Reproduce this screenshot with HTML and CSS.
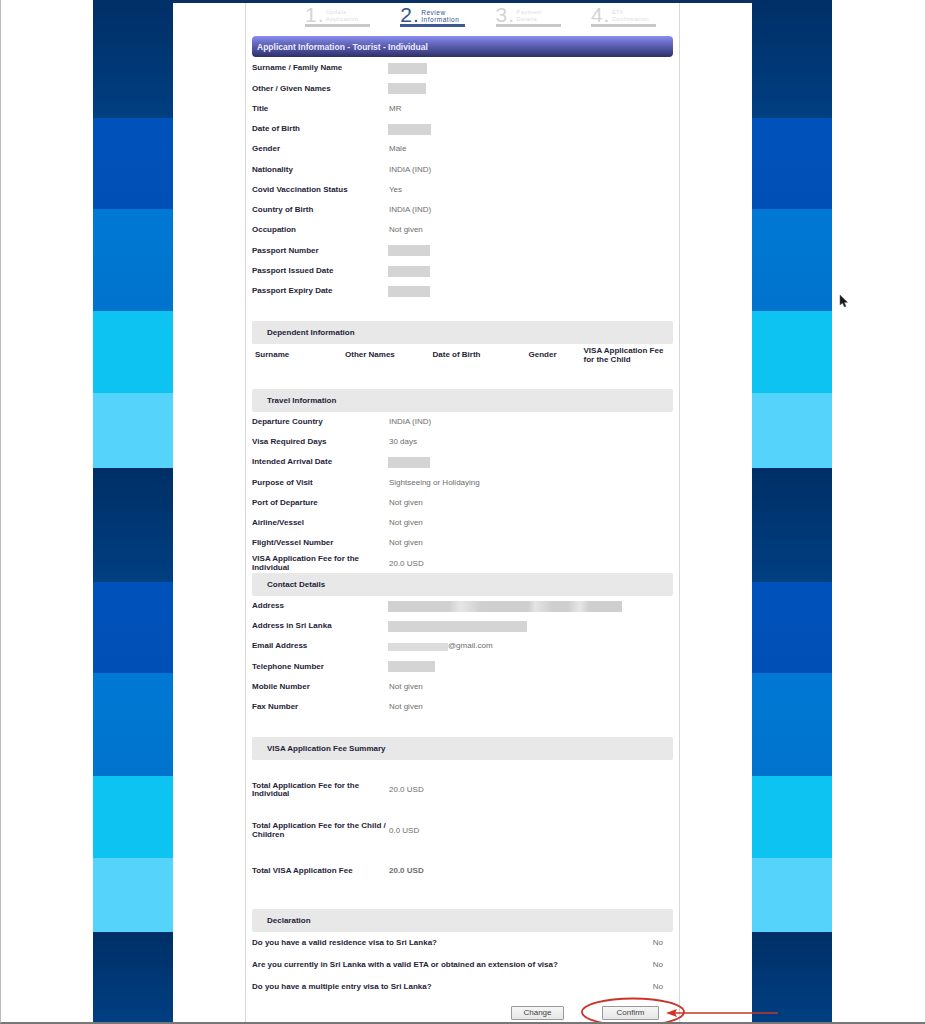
FILE: index.html
```html
<!DOCTYPE html>
<html lang="en">
<head>
<meta charset="utf-8">
<title>Review Information</title>
<link rel="stylesheet" href="styles.css">
</head>
<body>
<div class="page">
  <div class="stripes">
    <i class="s s-dark1"></i><i class="s s-blue1"></i><i class="s s-mid1"></i><i class="s s-cyan1"></i><i class="s s-light1"></i>
    <i class="s s-dark2"></i><i class="s s-blue2"></i><i class="s s-mid2"></i><i class="s s-cyan2"></i><i class="s s-light2"></i><i class="s s-dark3"></i>
  </div>
  <main class="sheet">
    <div class="column">
      <div class="steps">
        <div class="step"><span class="num">1.</span><span class="lbl">Update<br>Application</span></div>
        <div class="step on"><span class="num">2.</span><span class="lbl">Review<br>Information</span></div>
        <div class="step"><span class="num">3.</span><span class="lbl">Payment<br>Details</span></div>
        <div class="step"><span class="num">4.</span><span class="lbl">ETA<br>Confirmation</span></div>
      </div>
      <h1 class="title">Applicant Information - Tourist - Individual</h1>
      <section class="rows">
        <div class="row"><b>Surname / Family Name</b><span><em class="mask w38"></em></span></div>
        <div class="row"><b>Other / Given Names</b><span><em class="mask w37"></em></span></div>
        <div class="row"><b>Title</b><span>MR</span></div>
        <div class="row"><b>Date of Birth</b><span><em class="mask w42"></em></span></div>
        <div class="row"><b>Gender</b><span>Male</span></div>
        <div class="row"><b>Nationality</b><span>INDIA (IND)</span></div>
        <div class="row"><b>Covid Vaccination Status</b><span>Yes</span></div>
        <div class="row"><b>Country of Birth</b><span>INDIA (IND)</span></div>
        <div class="row"><b>Occupation</b><span>Not given</span></div>
        <div class="row"><b>Passport Number</b><span><em class="mask w41"></em></span></div>
        <div class="row"><b>Passport Issued Date</b><span><em class="mask w41"></em></span></div>
        <div class="row"><b>Passport Expiry Date</b><span><em class="mask w41"></em></span></div>
      </section>
      <h2 class="band band-dep">Dependent Information</h2>
      <div class="dep">
        <b>Surname</b><b>Other Names</b><b>Date of Birth</b><b>Gender</b><b class="dep-fee">VISA Application Fee for the Child</b>
      </div>
      <h2 class="band band-travel">Travel Information</h2>
      <section class="rows">
        <div class="row"><b>Departure Country</b><span>INDIA (IND)</span></div>
        <div class="row"><b>Visa Required Days</b><span>30 days</span></div>
        <div class="row"><b>Intended Arrival Date</b><span><em class="mask w41"></em></span></div>
        <div class="row"><b>Purpose of Visit</b><span>Sightseeing or Holidaying</span></div>
        <div class="row"><b>Port of Departure</b><span>Not given</span></div>
        <div class="row"><b>Airline/Vessel</b><span>Not given</span></div>
        <div class="row"><b>Flight/Vessel Number</b><span>Not given</span></div>
        <div class="row"><b>VISA Application Fee for the Individual</b><span>20.0 USD</span></div>
      </section>
      <h2 class="band band-contact">Contact Details</h2>
      <section class="rows">
        <div class="row"><b>Address</b><span><em class="mask w234 patchy"></em></span></div>
        <div class="row"><b>Address in Sri Lanka</b><span><em class="mask w139"></em></span></div>
        <div class="row"><b>Email Address</b><span><em class="mask w60 flat"></em>@gmail.com</span></div>
        <div class="row"><b>Telephone Number</b><span><em class="mask w46"></em></span></div>
        <div class="row"><b>Mobile Number</b><span>Not given</span></div>
        <div class="row"><b>Fax Number</b><span>Not given</span></div>
      </section>
      <h2 class="band band-fee">VISA Application Fee Summary</h2>
      <section class="fees">
        <div class="row tall"><b>Total Application Fee for the Individual</b><span>20.0 USD</span></div>
        <div class="row tall"><b>Total Application Fee for the Child / Children</b><span>0.0 USD</span></div>
        <div class="row tall"><b>Total VISA Application Fee</b><span class="strong">20.0 USD</span></div>
      </section>
      <h2 class="band band-decl">Declaration</h2>
      <section class="decl">
        <div class="q"><b>Do you have a valid residence visa to Sri Lanka?</b><span>No</span></div>
        <div class="q"><b>Are you currently in Sri Lanka with a valid ETA or obtained an extension of visa?</b><span>No</span></div>
        <div class="q"><b>Do you have a multiple entry visa to Sri Lanka?</b><span>No</span></div>
      </section>
      <div class="actions">
        <button class="btn" type="button">Change</button>
        <button class="btn" type="button">Confirm</button>
      </div>
    </div>
  </main>
  <div class="stripes">
    <i class="s s-dark1"></i><i class="s s-blue1"></i><i class="s s-mid1"></i><i class="s s-cyan1"></i><i class="s s-light1"></i>
    <i class="s s-dark2"></i><i class="s s-blue2"></i><i class="s s-mid2"></i><i class="s s-cyan2"></i><i class="s s-light2"></i><i class="s s-dark3"></i>
  </div>
  <svg class="callout" width="220" height="34" viewBox="0 0 220 34" aria-hidden="true">
    <ellipse cx="52" cy="15" rx="51" ry="13.500" fill="none" stroke="#c9352a" stroke-width="1.8"/>
    <path d="M197 16H94" fill="none" stroke="#c9352a" stroke-width="1.4"/>
    <path d="M85 16L96 12L94 16L96 20Z" fill="#d8301f"/>
  </svg>
  <svg class="cursor" width="10" height="15" viewBox="0 0 10 15" aria-hidden="true">
    <path d="M1 1L1 11L3.500 9L5.500 13L7 12.300L5.300 8.500L8.500 8.300Z" fill="#1a1a1a" stroke="#555" stroke-width=".5"/>
  </svg>
</div>
</body>
</html>
```
FILE: styles.css
```css
* { box-sizing: border-box; }
html, body { margin: 0; padding: 0; background: #fff; }
.page {
  position: relative;
  width: 925px;
  height: 1024px;
  overflow: hidden;
  padding: 0 93px 0 92px;
  display: grid;
  grid-template-columns: 80px 579px 80px;
  background: #fff;
  border-left: 1px solid #bbb;
  border-bottom: 2px solid #777;
  font-family: "Liberation Sans", Arial, sans-serif;
  font-size: 8px;
}
.stripes { display: flex; flex-direction: column; height: 1024px; }
.s { display: block; flex: none; }
.s-dark1 { height: 118px; background: linear-gradient(#002f66, #003f82); }
.s-blue1 { height: 91px; background: linear-gradient(#0052bb, #004fb5); }
.s-mid1 { height: 102px; background: linear-gradient(#0079d4, #0073cd); }
.s-cyan1 { height: 82px; background: #0cc3f1; }
.s-light1 { height: 75px; background: #55d3fb; }
.s-dark2 { height: 114px; background: linear-gradient(#002f66, #003f82); }
.s-blue2 { height: 91px; background: linear-gradient(#0052bb, #004fb5); }
.s-mid2 { height: 103px; background: linear-gradient(#0079d4, #0073cd); }
.s-cyan2 { height: 82px; background: #0cc3f1; }
.s-light2 { height: 74px; background: #55d3fb; }
.s-dark3 { height: 92px; background: linear-gradient(#002f66, #003f82); }
.sheet {
  border-top: 3px solid #0a2f63;
  background: #fff;
  padding: 0 72px;
}
.column {
  width: 435px;
  height: 1021px;
  border-left: 1px solid #d8d8d8;
  border-right: 1px solid #d8d8d8;
  padding: 0 6px;
}
.steps {
  height: 33px;
  display: grid;
  grid-template-columns: repeat(4, 65px);
  column-gap: 30.300px;
  padding-left: 53px;
}
.step {
  margin-top: 2px;
  height: 21.500px;
  border-bottom: 3px solid #c8c8c8;
  display: flex;
  align-items: flex-end;
  color: #d4d4d4;
}
.step.on { border-bottom-color: #3d5a96; color: #34508e; }
.num { font-size: 21px; line-height: 18px; letter-spacing: 1px; flex: none; width: 21px; }
.lbl { font-size: 6.500px; line-height: 7px; letter-spacing: .5px; white-space: nowrap; padding-bottom: 1px; }
.step:not(.on) .lbl { font-size: 5.500px; color: #dcdcdc; }
.title {
  margin: 0 0 1.500px;
  height: 21px;
  padding: 6px 5px 0;
  border-radius: 4px;
  background: linear-gradient(#8a8ff0 0, #6f73cc 25%, #474a93 70%, #2e3068 100%);
  color: #eef;
  font-size: 8.500px;
  line-height: 10px;
  font-weight: bold;
}
.row {
  display: grid;
  grid-template-columns: 137px 1fr;
  height: 20.250px;
  align-items: center;
  line-height: 8.500px;
}
.row b { color: #1f2438; }
.row span { color: #6e6e6e; white-space: nowrap; display: flex; align-items: center; }
.rows .row:last-child b { margin-right: 20px; }
.mask {
  display: block;
  height: 11px;
  background: #d4d4d4;
  filter: blur(.7px);
  margin-left: -1px;
}
.w38 { width: 39px; }
.w37 { width: 38px; }
.w42 { width: 43px; }
.w41 { width: 42px; }
.w46 { width: 47px; }
.w60 { width: 60px; }
.w139 { width: 139px; }
.w234 { width: 234px; }
.flat { height: 8px; background: #dcdcdc; }
.patchy {
  background: linear-gradient(90deg, #d0d0d0 0 26%, #e6e6e6 31%, #cfcfcf 40% 60%, #e4e4e4 63%, #cfcfcf 70% 77%, #e6e6e6 82%, #cfcfcf 86% 100%);
}
.band {
  margin: 0;
  height: 23px;
  padding: 0 15px;
  background: #e8e8e8;
  border-radius: 2px;
  color: #1f2438;
  font-size: 8px;
  line-height: 23px;
  font-weight: bold;
}
.band-dep { margin-top: 19.500px; }
.band-travel { margin-top: 0; }
.band-contact { margin-top: -1px; }
.band-fee { margin-top: 19px; }
.band-decl { margin-top: 17px; }
.dep {
  height: 45px;
  display: grid;
  grid-template-columns: 90px 87.500px 96px 55px 1fr;
  padding: 3px 0 0 3px;
  align-items: start;
  color: #1f2438;
  line-height: 8.500px;
}
.dep b { padding-top: 4px; }
.dep .dep-fee { padding-top: 0; }
.fees { padding-top: 10.500px; }
.tall { height: 40.500px; }
.strong { font-weight: bold; color: #444; }
.decl { padding-top: 1px; }
.q {
  height: 22px;
  display: flex;
  justify-content: space-between;
  align-items: center;
  padding-right: 10px;
  line-height: 8.500px;
}
.q b { color: #1f2438; }
.q span { color: #6e6e6e; }
.actions {
  margin-top: 7.500px;
  display: flex;
  gap: 38px;
  padding-left: 259px;
}
.btn {
  width: 53px;
  height: 14px;
  padding: 0;
  font: 8px/12px "Liberation Sans", Arial, sans-serif;
  color: #444;
  background: linear-gradient(#f6f6f6, #e6e6e6);
  border: 1px solid #9a9a9a;
  border-radius: 1px;
}
.actions .btn:last-child { width: 57px; }
.callout { position: absolute; left: 580px; top: 997px; }
.cursor { position: absolute; left: 838px; top: 294px; }
```
